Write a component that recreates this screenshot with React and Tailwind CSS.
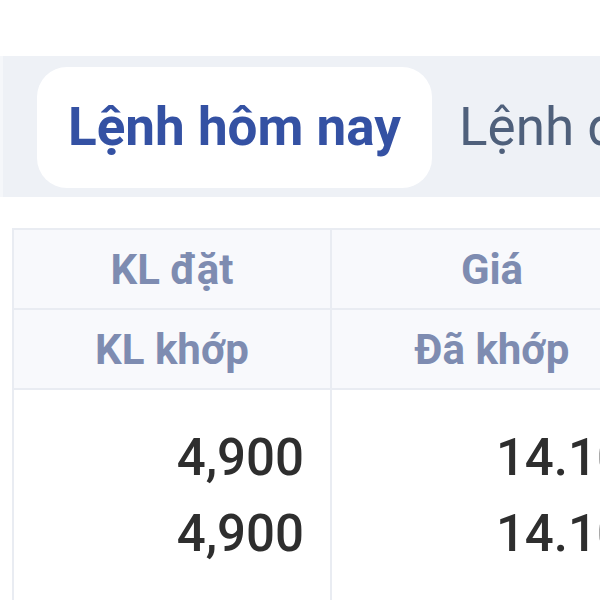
import React from 'react';

const rows = [
  { ordered: '4,900', matched: '4,900', price: '14.10', done: '14.10' },
];

export default function App() {
  return (
    <div className="w-[600px] h-[600px] overflow-hidden bg-white font-['Roboto',sans-serif]">
      {/* Tabs */}
      <div className="mt-[56px] h-[141px] bg-[#eef1f6] border-l-[3px] border-[#f5f7fa] flex items-start pt-[11px] pl-[34px] gap-[27px] whitespace-nowrap">
        <div className="h-[121px] w-[395px] shrink-0 bg-white rounded-[30px] flex items-center justify-center">
          <span className="text-[53px] font-bold text-[#3451a3] leading-none">Lệnh hôm nay</span>
        </div>
        <div className="h-[121px] flex items-center">
          <span className="text-[53px] font-normal text-[#4f607b] leading-none">Lệnh đặt trước</span>
        </div>
      </div>

      {/* Table */}
      <div className="mt-[31px] ml-[12px] w-[700px] border-l-2 border-t-2 border-[#e9ecf2]">
        <div className="grid grid-cols-[318px_320px] bg-[#f8f9fc]">
          <div className="h-[80px] flex items-center justify-center border-r-2 border-b-2 border-[#e9ecf2] text-[42px] font-bold text-[#7e8cb1]">KL đặt</div>
          <div className="h-[80px] flex items-center justify-center border-b-2 border-[#e9ecf2] text-[42px] font-bold text-[#7e8cb1]">Giá</div>
          <div className="h-[80px] flex items-center justify-center border-r-2 border-b-2 border-[#e9ecf2] text-[42px] font-bold text-[#7e8cb1]">KL khớp</div>
          <div className="h-[80px] flex items-center justify-center border-b-2 border-[#e9ecf2] text-[42px] font-bold text-[#7e8cb1]">Đã khớp</div>
        </div>
        {rows.map((r, i) => (
          <div key={i} className="grid grid-cols-[318px_320px] bg-white">
            <div className="h-[220px] pt-[30px] pr-[26px] border-r-2 border-[#e9ecf2] text-right text-[51px] font-medium leading-[76px] text-[#2e2e2e]">
              <div>{r.ordered}</div>
              <div>{r.matched}</div>
            </div>
            <div className="h-[220px] pt-[30px] pr-[26px] text-right text-[51px] font-medium leading-[76px] text-[#2e2e2e]">
              <div>{r.price}</div>
              <div>{r.done}</div>
            </div>
          </div>
        ))}
      </div>
    </div>
  );
}
